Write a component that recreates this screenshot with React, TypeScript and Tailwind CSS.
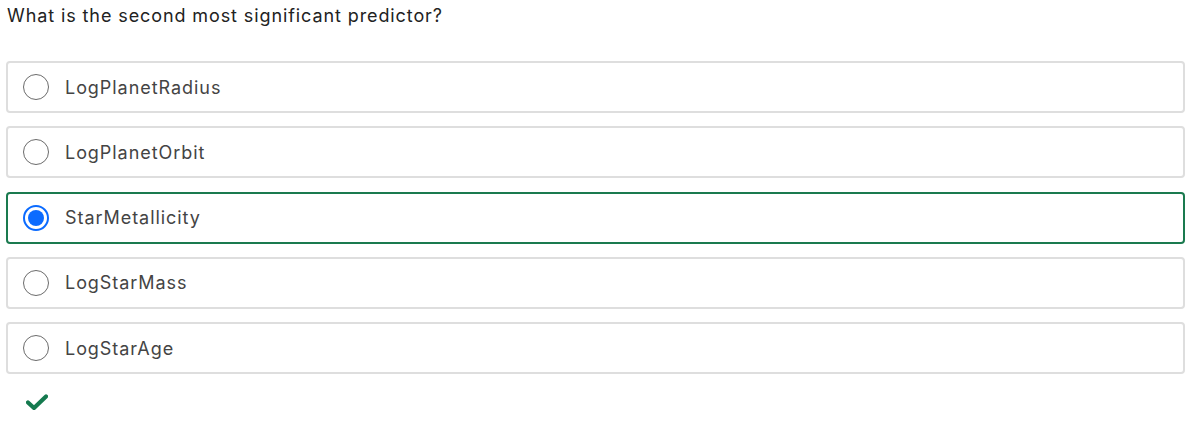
import React from "react";

const options = [
  "LogPlanetRadius",
  "LogPlanetOrbit",
  "StarMetallicity",
  "LogStarMass",
  "LogStarAge",
];

export default function App() {
  const selected = 2;
  return (
    <div
      className="bg-white w-[1193px] h-[423px] pl-[6px] pr-[8px] pt-[2px]"
      style={{ fontFamily: "Inter, 'Noto Sans', sans-serif" }}
    >
      <h1 className="text-[18px] leading-[27px] tracking-[0.9px] text-[#222222] pl-[1px] font-normal">
        What is the second most significant predictor?
      </h1>
      <div className="mt-[32px] flex flex-col gap-[13.25px]">
        {options.map((o, i) => {
          const sel = i === selected;
          return (
            <div
              key={o}
              className={
                "h-[52px] rounded-[4px] border-2 flex items-center pl-[15px] " +
                (sel ? "border-[#1a7a4f]" : "border-[#dedede]")
              }
            >
              {sel ? (
                <span className="w-[26px] h-[26px] rounded-full border-2 border-[#0b6bff] flex items-center justify-center">
                  <span className="w-[16px] h-[16px] rounded-full bg-[#0b6bff]" />
                </span>
              ) : (
                <span className="w-[26px] h-[26px] rounded-full border-[1.5px] border-[#6b6b6b]" />
              )}
              <span className="ml-[16px] text-[18px] tracking-[0.95px] text-[#444444]">{o}</span>
            </div>
          );
        })}
      </div>
      <div className="mt-[20px] pl-[20px]">
        <svg width="22" height="16" viewBox="0 0 22 16" className="block">
          <path
            d="M2 8.5 L8 14 L20 2.5"
            fill="none"
            stroke="#157a4f"
            strokeWidth="4.2"
            strokeLinecap="round"
            strokeLinejoin="round"
          />
        </svg>
      </div>
    </div>
  );
}
